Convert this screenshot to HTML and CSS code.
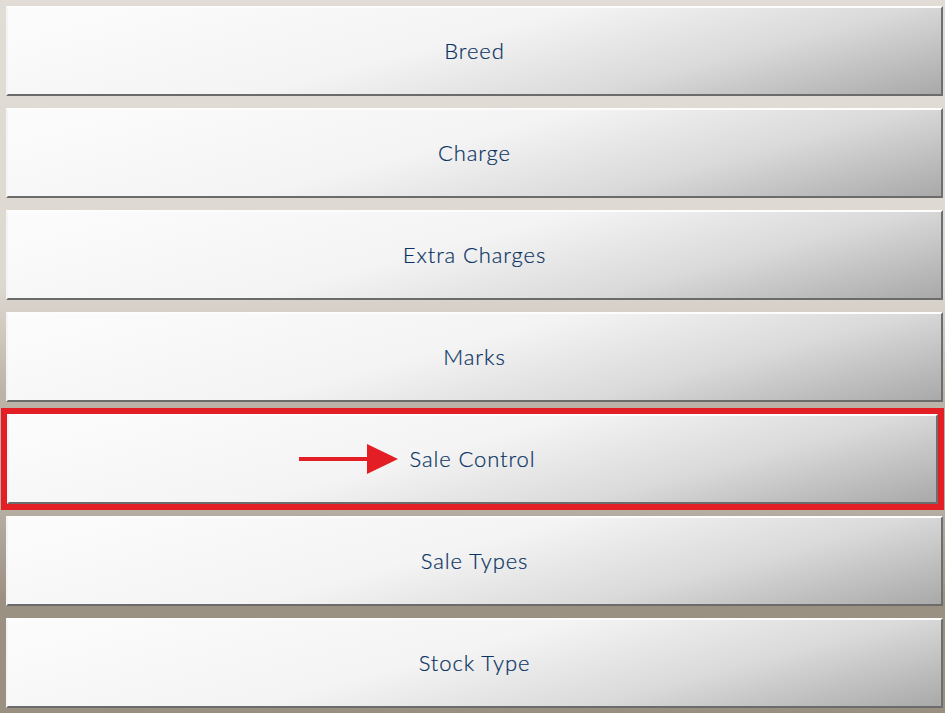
FILE: index.html
```html
<!DOCTYPE html>
<html lang="en">
<head>
    <meta charset="UTF-8">
    <meta name="viewport" content="width=device-width, initial-scale=1.0">
    <title>Setup Menu</title>
    <link rel="stylesheet" href="styles.css">
</head>
<body>

<div class="menu">
    <button class="menu-button">Breed</button>
    <button class="menu-button">Charge</button>
    <button class="menu-button">Extra Charges</button>
    <button class="menu-button">Marks</button>
    <button class="menu-button selected">
        <span class="arrow">
            <svg width="100" height="32" viewBox="0 0 100 32">
                <rect x="0" y="14" width="72" height="4" fill="#e31e24"/>
                <polygon points="68,1 99,16 68,31" fill="#e31e24"/>
            </svg>
        </span>
        Sale Control
    </button>
    <button class="menu-button">Sale Types</button>
    <button class="menu-button">Stock Type</button>
</div>

</body>
</html>
```

FILE: styles.css
```css
body {
    margin: 0;
    padding: 6px 2px 0 6px;
    height: 713px;
    box-sizing: border-box;
    overflow: hidden;
    font-family: "Lato", "DejaVu Sans", sans-serif;
    background: linear-gradient(to bottom, #e1ddd6 0%, #ddd8d0 40%, #bcb4a9 55%, #b5ada2 72%, #9b9183 84%, #9a9082 100%);
}

.menu {
    display: flex;
    flex-direction: column;
    gap: 12px;
}

.menu-button {
    position: relative;
    display: flex;
    align-items: center;
    justify-content: center;
    height: 90px;
    width: 937px;
    padding: 0 0 2px 0;
    border-style: solid;
    border-width: 2px;
    border-color: #fdfdfd #6e6e6e #6b6b6b #f4f4f4;
    background: linear-gradient(165deg, #fcfcfc 0%, #f4f4f4 45%, #dadada 72%, #a9a9a9 100%);
    color: #0a3263;
    font-family: "Lato", "DejaVu Sans", sans-serif;
    font-weight: 300;
    font-size: 22px;
    letter-spacing: 0.9px;
    -webkit-text-stroke: 0.2px #0a3263;
    cursor: pointer;
}

.menu-button.selected {
    outline: 6px solid #e31e24;
    outline-offset: 0;
    width: 931px;
    margin-left: 1px;
}

.arrow {
    position: absolute;
    left: 290px;
    top: 27px;
    line-height: 0;
}
```
